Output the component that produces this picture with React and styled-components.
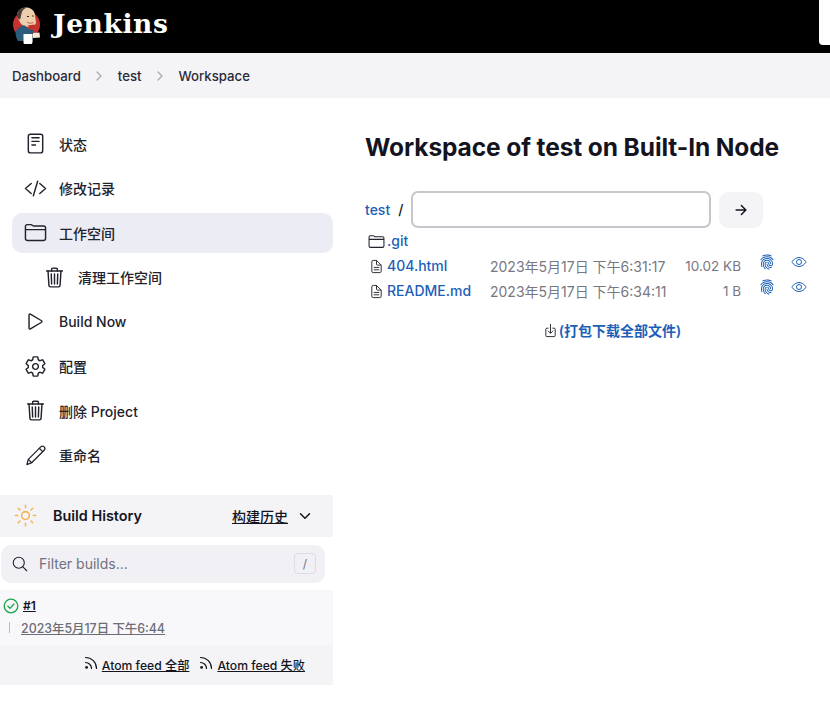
import React from 'react';
import styled, { createGlobalStyle } from 'styled-components';
import {
  IoReaderOutline,
  IoCodeSlashOutline,
  IoFolderOutline,
  IoTrashOutline,
  IoPlayOutline,
  IoSettingsOutline,
  IoSearchOutline,
  IoChevronDownOutline,
  IoChevronForwardOutline,
  IoSunnyOutline,
  IoArrowForwardOutline,
  IoDocumentTextOutline,
  IoFingerPrint,
  IoEyeOutline,
  IoDownloadOutline,
} from 'react-icons/io5';

const FONT = `Inter, "Noto Sans CJK SC", sans-serif`;

const GlobalStyle = createGlobalStyle`
  html, body {
    margin: 0;
    padding: 0;
    background: #fff;
    font-family: ${FONT};
    color: #14141f;
  }
`;

// top bar
const Header = styled.header`
  height: 53px;
  background: #000;
  display: flex;
  align-items: center;
  justify-content: space-between;
  padding-left: 12px;
`;

const Brand = styled.div`
  display: flex;
  align-items: center;
  gap: 11px;
`;

const Wordmark = styled.span`
  font-family: "DejaVu Serif", serif;
  font-weight: 700;
  font-size: 26.5px;
  letter-spacing: 0.6px;
  color: #fff;
  line-height: 48px;
  margin-top: -6px;
`;

const CornerBox = styled.div`
  width: 11px;
  height: 45px;
  align-self: flex-start;
  background: #fff;
  border-bottom-left-radius: 4px;
`;

// breadcrumb
const Crumbs = styled.nav`
  height: 45px;
  background: #f4f4f7;
  display: flex;
  align-items: center;
  padding-left: 12px;
  font-size: 13.2px;
  font-weight: 500;
  color: #2b2b38;
`;

const CrumbSep = styled.span`
  display: flex;
  color: #a9a9b2;
  font-size: 14px;
  margin: 0 11.5px;
`;

const Page = styled.div`
  display: grid;
  grid-template-columns: 333px 1fr;
  column-gap: 32px;
`;

const Side = styled.aside`
  padding-top: 26px;
`;

const Tasks = styled.div`
  padding-left: 12px;
  display: flex;
  flex-direction: column;
  gap: 4.5px;
`;

const Task = styled.div`
  height: 40px;
  box-sizing: border-box;
  padding-bottom: 1px;
  display: flex;
  align-items: center;
  gap: 12px;
  padding-left: ${(p) => (p.$sub ? 31 : 12)}px;
  border-radius: 10px;
  background: ${(p) => (p.$active ? '#ecedf4' : 'transparent')};
  font-size: 14px;
  font-weight: 500;
  color: #22222c;

  svg {
    width: 23px;
    height: 23px;
    flex: none;
  }
`;

// build history
const HistoryHead = styled.div`
  margin-top: 19px;
  height: 42px;
  background: #f4f4f7;
  display: flex;
  align-items: center;
  padding: 0 20px 0 13px;
  font-size: 14px;
  font-weight: 600;
  color: #14141f;
`;

const HistoryTitle = styled.span`
  font-size: 14.4px;
`;

const Sun = styled.span`
  display: flex;
  color: #f5b451;
  font-size: 25px;
  margin-right: 15px;
`;

const HistoryLink = styled.a`
  margin-left: auto;
  text-decoration: underline;
  font-weight: 500;
  color: #14141f;
`;

const Chevron = styled.span`
  display: flex;
  font-size: 16px;
  margin-left: 9px;
`;

const Filter = styled.div`
  margin: 8px 8px 7px 1px;
  height: 38px;
  border-radius: 10px;
  background: #f0f0f5;
  display: flex;
  align-items: center;
  padding: 0 9px 0 10px;
  font-size: 14px;
  color: #71717f;
  gap: 10px;

  svg {
    font-size: 18px;
    color: #22222c;
  }
`;

const KeyHint = styled.span`
  margin-left: auto;
  width: 20px;
  height: 19px;
  border: 1px solid #dcdce3;
  border-radius: 4px;
  display: flex;
  align-items: center;
  justify-content: center;
  font-size: 12px;
  color: #71717f;
`;

const BuildRow = styled.div`
  background: #f8f8fa;
  height: 55px;
  padding: 7px 0 0 3px;
  box-sizing: border-box;
`;

const BuildTitle = styled.div`
  display: flex;
  align-items: center;
  gap: 4px;
  font-size: 12px;
  font-weight: 600;
  text-decoration: underline;
  height: 18px;
`;

const BuildDate = styled.div`
  margin: 4px 0 0 6px;
  padding-left: 12px;
  font-size: 12.4px;
  font-weight: 500;
  color: #6d6d78;
  text-decoration: underline;
  position: relative;

  &::before {
    content: '';
    position: absolute;
    left: 0;
    top: 3px;
    height: 11px;
    width: 1px;
    background: #b9b9c2;
  }
`;

const Feeds = styled.div`
  height: 40px;
  background: #f4f4f7;
  display: flex;
  justify-content: flex-end;
  align-items: center;
  padding-right: 28px;
  gap: 10px;
  font-size: 12.2px;
  font-weight: 500;
`;

const Feed = styled.span`
  display: flex;
  align-items: center;
  gap: 4px;
  text-decoration: underline;
  color: #14141f;

  svg {
    margin-top: -4px;
  }
`;

// main content
const Main = styled.main`
  padding-top: 32px;
`;

const Title = styled.h1`
  margin: 0;
  font-size: 24.5px;
  line-height: 34px;
  font-weight: 700;
  color: #14141f;
  letter-spacing: -0.1px;
`;

const PathRow = styled.div`
  margin-top: 27px;
  display: flex;
  align-items: center;
  font-size: 14px;
  font-weight: 500;
`;

const BlueLink = styled.a`
  color: #1c5fb8;
  font-weight: 500;
  font-size: 14px;
`;

const Slash = styled.span`
  margin: 0 8px;
`;

const PathInput = styled.input`
  width: 296px;
  height: 33px;
  box-sizing: content-box;
  border: 2px solid #c6c6cc;
  border-radius: 7px;
  background: #fff;
  padding: 0;
  outline: none;
`;

const GoButton = styled.button`
  width: 44px;
  height: 36px;
  margin-left: 8px;
  border: none;
  border-radius: 9px;
  background: #f4f4f7;
  display: flex;
  align-items: center;
  justify-content: center;
  font-size: 16px;
  color: #14141f;
  padding: 0;
`;

const Files = styled.div`
  margin-top: 0;
  display: grid;
  grid-template-columns: 125px 176px 75px 34px 1fr;
  grid-auto-rows: 25px;
  align-items: center;
`;

const NameCell = styled.div`
  display: flex;
  align-items: center;
  gap: ${(p) => (p.$folder ? 2 : 3)}px;
  padding-left: ${(p) => (p.$folder ? 3 : 4)}px;
  grid-column: ${(p) => (p.$folder ? '1 / -1' : 'auto')};
  color: #22222c;

  svg {
    font-size: ${(p) => (p.$folder ? 17 : 15)}px;
    flex: none;
    margin-top: 1px;
  }
`;

const DateCell = styled.div`
  font-size: 14px;
  color: #787882;
  white-space: nowrap;
`;

const SizeCell = styled.div`
  font-size: 13.5px;
  color: #787882;
  text-align: right;
  white-space: nowrap;
`;

const ActionCell = styled.div`
  display: flex;
  justify-content: ${(p) => (p.$left ? 'flex-start' : 'flex-end')};
  padding-bottom: 7px;
  padding-left: ${(p) => (p.$left ? 16 : 0)}px;
  color: #1c5fb8;
  font-size: 16px;
`;

const ZipRow = styled.div`
  margin-top: 17px;
  width: 494px;
  display: flex;
  justify-content: center;
  align-items: center;
  gap: 1px;
  font-size: 14px;
  font-weight: 600;
  color: #1c5fb8;

  svg {
    color: #22222c;
    font-size: 15px;
  }
`;

const JenkinsLogo = () => (
  <svg width="30" height="42" viewBox="0 0 30 42">
    <circle cx="14.500" cy="18.500" r="13.500" fill="#c8322d" />
    <path d="M5 10C5 4 10 1 15 1.500c5 .5 8 4 8 8.500l1 6c0 3-3 5-7 5-5 0-9-3-10-7-1-1-2-2-2-4z" fill="#edcfae" />
    <path d="M5 11C4 5 9 1 15 1.500c-3 1-5 3-5.500 6-.5 2-.5 4-1.500 6-1 0-2.500-1-3-2.500z" fill="#4c4138" />
    <path d="M15 10.500h2M20 10h1.500" stroke="#2a2320" strokeWidth="1.200" />
    <path d="M15 16c2 1.500 4.500 1.500 6.500.5" stroke="#b9644e" strokeWidth="1" fill="none" />
    <path d="M4 25c2-4 6-6 9-5.500l3.500 3.500 5 1-1 5v6H6c-2-3-3-7-2-10z" fill="#2c5c7c" />
    <path d="M15.500 19.500l7-1 1 3.500-4.500 1z" fill="#c0302a" />
    <path d="M11.500 28h9v8.500c-.5 1.500-1 1.500-1.500 1.500h-6c-1 0-1.500-.5-1.500-1.500z" fill="#fff" />
    <path d="M21 27l6.500-.5.500 5-7 .5z" fill="#f3ead9" />
  </svg>
);

const StatusOk = () => (
  <svg width="16" height="16" viewBox="0 0 16 16" fill="none">
    <circle cx="8" cy="8" r="6.800" stroke="#1ea64a" strokeWidth="1.300" />
    <path d="M4.900 8.300l2.100 2.100 4-4.400" stroke="#1ea64a" strokeWidth="1.300" strokeLinecap="round" strokeLinejoin="round" />
  </svg>
);

const RssIcon = () => (
  <svg width="14" height="14" viewBox="0 0 14 14" fill="none">
    <circle cx="2.600" cy="11.400" r="1.400" fill="#14141f" />
    <path d="M1.500 6.500c3.400 0 6 2.600 6 6M1.500 1.500c6.200 0 11 4.800 11 11" stroke="#14141f" strokeWidth="1.200" strokeLinecap="round" />
  </svg>
);

const PencilIcon = () => (
  <svg viewBox="0 0 24 24" fill="none" stroke="#22222c" strokeWidth="1.300" strokeLinejoin="round" strokeLinecap="round">
    <path d="M3 21.500l1.500-5.500L17.500 3c1-1 2.500-1 3.500 0s1 2.500 0 3.500L8 19.500z" />
    <path d="M4.500 16l3.500 3.500M16 4.500l3.500 3.500" />
  </svg>
);

const tasks = [
  { icon: <IoReaderOutline />, label: '状态' },
  { icon: <IoCodeSlashOutline />, label: '修改记录' },
  { icon: <IoFolderOutline />, label: '工作空间', active: true },
  { icon: <IoTrashOutline />, label: '清理工作空间', sub: true },
  { icon: <IoPlayOutline />, label: 'Build Now' },
  { icon: <IoSettingsOutline />, label: '配置' },
  { icon: <IoTrashOutline />, label: '删除 Project' },
  { icon: <PencilIcon />, label: '重命名' },
];

const files = [
  { name: '404.html', date: '2023年5月17日 下午6:31:17', size: '10.02 KB' },
  { name: 'README.md', date: '2023年5月17日 下午6:34:11', size: '1 B' },
];

export default function App() {
  return (
    <>
      <GlobalStyle />
      <Header>
        <Brand>
          <JenkinsLogo />
          <Wordmark>Jenkins</Wordmark>
        </Brand>
        <CornerBox />
      </Header>
      <Crumbs>
        Dashboard
        <CrumbSep><IoChevronForwardOutline /></CrumbSep>
        test
        <CrumbSep><IoChevronForwardOutline /></CrumbSep>
        Workspace
      </Crumbs>
      <Page>
        <Side>
          <Tasks>
            {tasks.map((t) => (
              <Task key={t.label} $active={t.active} $sub={t.sub}>
                {t.icon}
                {t.label}
              </Task>
            ))}
          </Tasks>
          <HistoryHead>
            <Sun><IoSunnyOutline /></Sun>
            <HistoryTitle>Build History</HistoryTitle>
            <HistoryLink>构建历史</HistoryLink>
            <Chevron><IoChevronDownOutline /></Chevron>
          </HistoryHead>
          <Filter>
            <IoSearchOutline />
            Filter builds...
            <KeyHint>/</KeyHint>
          </Filter>
          <BuildRow>
            <BuildTitle>
              <StatusOk />
              #1
            </BuildTitle>
            <BuildDate>2023年5月17日 下午6:44</BuildDate>
          </BuildRow>
          <Feeds>
            <Feed><RssIcon />Atom feed 全部</Feed>
            <Feed><RssIcon />Atom feed 失败</Feed>
          </Feeds>
        </Side>
        <Main>
          <Title>Workspace of test on Built-In Node</Title>
          <PathRow>
            <BlueLink>test</BlueLink>
            <Slash>/</Slash>
            <PathInput />
            <GoButton><IoArrowForwardOutline /></GoButton>
          </PathRow>
          <Files>
            <NameCell $folder>
              <IoFolderOutline />
              <BlueLink>.git</BlueLink>
            </NameCell>
            {files.map((f) => (
              <React.Fragment key={f.name}>
                <NameCell>
                  <IoDocumentTextOutline />
                  <BlueLink>{f.name}</BlueLink>
                </NameCell>
                <DateCell>{f.date}</DateCell>
                <SizeCell>{f.size}</SizeCell>
                <ActionCell><IoFingerPrint /></ActionCell>
                <ActionCell $left><IoEyeOutline /></ActionCell>
              </React.Fragment>
            ))}
          </Files>
          <ZipRow>
            <IoDownloadOutline />
            (打包下载全部文件)
          </ZipRow>
        </Main>
      </Page>
    </>
  );
}
